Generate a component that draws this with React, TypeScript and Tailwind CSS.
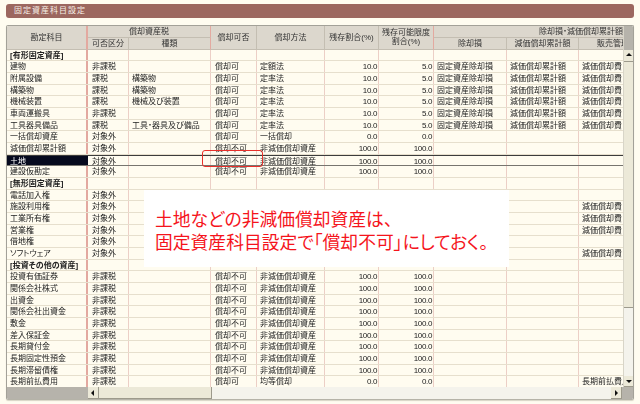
const COLS = "grid grid-cols-[81px_41px_82px_46px_68px_54px_55px_73px_72px_44px]"

type Row = {
    name: string
    kubun?: string
    shurui?: string
    kahi?: string
    houhou?: string
    zan?: string
    gendo?: string
    joky?: string
    ruikei?: string
    hanbai?: string
    section?: boolean
    selected?: boolean
}

const fixed = (name: string, kubun: string, shurui: string, houhou: string, zan: string): Row => ({
    name, kubun, shurui, kahi: "償却可", houhou, zan, gendo: "5.0",
    joky: "固定資産除却損", ruikei: "減価償却累計額", hanbai: "減価償却費",
})
const nonDep = (name: string, kubun: string, selected = false): Row => ({
    name, kubun, kahi: "償却不可", houhou: "非減価償却資産", zan: "100.0", gendo: "100.0", selected,
})

const ROWS: Row[] = [
    { name: "[有形固定資産]", section: true },
    fixed("建物", "非課税", "", "定額法", "10.0"),
    fixed("附属設備", "課税", "構築物", "定率法", "10.0"),
    fixed("構築物", "課税", "構築物", "定率法", "10.0"),
    fixed("機械装置", "課税", "機械及び装置", "定率法", "10.0"),
    fixed("車両運搬具", "非課税", "", "定率法", "10.0"),
    fixed("工具器具備品", "課税", "工具・器具及び備品", "定率法", "10.0"),
    { name: "一括償却資産", kubun: "対象外", kahi: "償却可", houhou: "一括償却", zan: "0.0", gendo: "0.0" },
    nonDep("減価償却累計額", "対象外"),
    nonDep("土地", "対象外", true),
    nonDep("建設仮勘定", "対象外"),
    { name: "[無形固定資産]", section: true },
    { name: "電話加入権", kubun: "対象外" },
    { name: "施設利用権", kubun: "対象外", hanbai: "減価償却費" },
    { name: "工業所有権", kubun: "対象外", hanbai: "減価償却費" },
    { name: "営業権", kubun: "対象外", hanbai: "減価償却費" },
    { name: "借地権", kubun: "対象外" },
    { name: "ソフトウェア", kubun: "対象外", hanbai: "減価償却費" },
    { name: "[投資その他の資産]", section: true },
    nonDep("投資有価証券", "非課税"),
    nonDep("関係会社株式", "非課税"),
    nonDep("出資金", "非課税"),
    nonDep("関係会社出資金", "非課税"),
    nonDep("敷金", "非課税"),
    nonDep("差入保証金", "非課税"),
    nonDep("長期貸付金", "非課税"),
    nonDep("長期固定性預金", "非課税"),
    nonDep("長期滞留債権", "非課税"),
    { name: "長期前払費用", kubun: "非課税", kahi: "償却可", houhou: "均等償却", zan: "0.0", gendo: "0.0", hanbai: "長期前払費用" },
]

const cell = "overflow-hidden whitespace-nowrap border-r border-[#eccfc6] leading-[12px]"
const num = "tracking-[-0.35px] text-right"
const head = "flex items-center justify-center overflow-hidden whitespace-nowrap border-r border-b border-[#c4beb2] text-center leading-[9px]"

function DataRow({ row }: { row: Row }) {
    const line = row.selected ? "border-y border-t-[#3c3c3c] border-b-[#77756f]" : "border-b border-[#e6dfcd]"
    return (
        <div className={`${COLS} h-[11.68px] ${line}`}>
            <div className={
                row.selected
                    ? "overflow-hidden whitespace-nowrap bg-[#060a1e] pl-[3px] leading-[11px] text-white"
                    : `overflow-hidden whitespace-nowrap border-r-2 border-[#e3a9a0] pl-[3px] leading-[12px] ${row.section ? "font-bold" : ""}`
            }>
                {row.name}
            </div>
            <div className={`${cell} pl-[4px]`}>{row.kubun}</div>
            <div className={`${cell} border-[#e3a9a0] pl-[3px]`}>{row.shurui}</div>
            <div className={`${cell} border-[#e3a9a0] pl-[4px]`}>{row.kahi}</div>
            <div className={`${cell} pl-[3px]`}>{row.houhou}</div>
            <div className={`${cell} ${num} pr-[1px]`}>{row.zan}</div>
            <div className={`${cell} ${num} border-[#e3a9a0] pr-[1px]`}>{row.gendo}</div>
            <div className={`${cell} pl-[3px]`}>{row.joky}</div>
            <div className={`${cell} pl-[3px]`}>{row.ruikei}</div>
            <div className="overflow-hidden whitespace-nowrap pl-[3px] leading-[12px]">{row.hanbai}</div>
        </div>
    )
}

function Arrow({ dir }: { dir: "up" | "down" | "left" | "right" }) {
    const points = {
        up: "4,2 1,5 7,5",
        down: "1,3 7,3 4,6",
        left: "5,1 5,7 2,4",
        right: "3,1 3,7 6,4",
    }[dir]
    return (
        <svg width="8" height="8" viewBox="0 0 8 8">
            <polygon points={points} fill="#111" />
        </svg>
    )
}

const btn = "flex items-center justify-center bg-[#ece9d8] border-b border-r border-[#9d9a8c]"

export default function App() {
    return (
        <div className="relative h-[404px] w-[640px] overflow-hidden bg-[#fffcf0] pt-[4px] font-['Liberation_Sans','Noto_Sans_CJK_JP',sans-serif] text-[8px] text-[#222] [font-feature-settings:'palt']">
            <div className="mx-[6px] flex h-[14px] items-center rounded-[3px] bg-[#9c675f] pl-[8px] text-[8px] tracking-[1px] text-[#f6efe6]">
                固定資産科目設定
            </div>

            <div className="mx-[6px] mt-[7px] flex h-[375px] flex-col overflow-hidden rounded-[2px] border border-[#a3a198] border-b-[#b5b3a8] shadow-[0_1px_1px_#d8d5c6] blur-[0.3px]">
                <div className="flex min-h-0 flex-1">
                    <div className="w-[616px] shrink-0">
                        <div className={`${COLS} h-[23.5px] grid-rows-[12px_11.5px] bg-[#dcd7cd] text-[#333]`}>
                            <div className={`${head} row-span-2 border-r-2 border-r-[#e3a9a0]`}>勘定科目</div>
                            <div className={`${head} col-span-2 border-r-[#e3a9a0]`}>償却資産税</div>
                            <div className={`${head} row-span-2`}>償却可否</div>
                            <div className={`${head} row-span-2`}>償却方法</div>
                            <div className={`${head} row-span-2`}>残存割合(%)</div>
                            <div className={`${head} row-span-2 flex-col border-r-[#e3a9a0]`}>
                                <span>残存可能限度</span>
                                <span>割合(%)</span>
                            </div>
                            <div className={`${head} col-span-3 justify-end border-r-0`}>除却損・減価償却累計額</div>
                            <div className={`${head}`}>可否区分</div>
                            <div className={`${head} border-r-[#e3a9a0]`}>種類</div>
                            <div className={`${head}`}>除却損</div>
                            <div className={`${head}`}>減価償却累計額</div>
                            <div className={`${head} justify-start border-r-0 pl-[18px]`}>販売管理</div>
                        </div>
                        {ROWS.map((row) => <DataRow key={row.name} row={row} />)}
                    </div>

                    <div className="flex w-[11px] shrink-0 flex-col border-l border-[#d8d5c8] bg-[#f4f3ec]">
                        <div className="h-[23.5px] shrink-0 bg-[#b6b3ab]" />
                        <div className={`${btn} h-[12px] shrink-0`}><Arrow dir="up" /></div>
                        <div className="h-[246px] shrink-0 border-b border-r border-[#9d9a8c] bg-[#ece9d8]" />
                        <div className="flex-1" />
                        <div className={`${btn} h-[11px] shrink-0`}><Arrow dir="down" /></div>
                    </div>
                </div>

                <div className="flex h-[12px] shrink-0 bg-[#f4f3ec]">
                    <div className="w-[81px] shrink-0 bg-[#b6b3ab]" />
                    <div className={`${btn} w-[11px] shrink-0`}><Arrow dir="left" /></div>
                    <div className="w-[113px] shrink-0 border-b border-r border-[#9d9a8c] bg-[#ece9d8]" />
                    <div className="flex-1" />
                    <div className={`${btn} w-[11px] shrink-0`}><Arrow dir="right" /></div>
                    <div className="w-[11px] shrink-0 bg-[#b6b3ab]" />
                </div>
            </div>

            {/* 土地行の償却不可を囲む赤枠 */}
            <div className="absolute left-[202px] top-[150px] h-[17px] w-[61px] rounded-[3px] border border-[#e8302a]" />

            <div className="absolute left-[144px] top-[190px] flex h-[77px] w-[365px] flex-col justify-center bg-white pl-[11px] pt-[2px] font-['Noto_Sans_CJK_JP',sans-serif] text-[17.8px] leading-[23px] text-[#f5141c]">
                <div>土地などの非減価償却資産は、</div>
                <div>固定資産科目設定で「償却不可」にしておく。</div>
            </div>
        </div>
    )
}
